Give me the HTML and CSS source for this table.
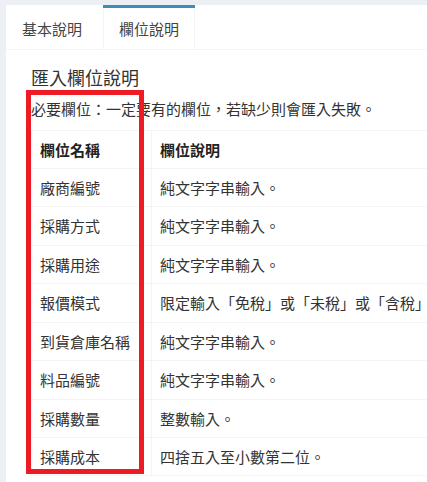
FILE: index.html
```html
<!DOCTYPE html>
<html lang="zh-Hant">
<head>
  <meta charset="UTF-8">
  <title>欄位說明</title>
  <link rel="stylesheet" href="styles.css">
</head>
<body>

<div class="tabs-box">
  <ul class="nav-tabs">
    <li><a href="#">基本說明</a></li>
    <li class="active"><a href="#">欄位說明</a></li>
  </ul>

  <div class="tab-content">
    <div class="pane">
      <h4>匯入欄位說明</h4>
      <p>必要欄位：一定要有的欄位，若缺少則會匯入失敗。</p>

      <table class="field-table">
        <colgroup>
          <col class="col-name">
          <col>
        </colgroup>
        <thead>
          <tr>
            <th>欄位名稱</th>
            <th>欄位說明</th>
          </tr>
        </thead>
        <tbody>
          <tr><td>廠商編號</td><td>純文字字串輸入。</td></tr>
          <tr><td>採購方式</td><td>純文字字串輸入。</td></tr>
          <tr><td>採購用途</td><td>純文字字串輸入。</td></tr>
          <tr><td>報價模式</td><td>限定輸入「免稅」或「未稅」或「含稅」。</td></tr>
          <tr><td>到貨倉庫名稱</td><td>純文字字串輸入。</td></tr>
          <tr><td>料品編號</td><td>純文字字串輸入。</td></tr>
          <tr><td>採購數量</td><td>整數輸入。</td></tr>
          <tr><td>採購成本</td><td>四捨五入至小數第二位。</td></tr>
        </tbody>
      </table>
    </div>
  </div>
</div>

<!-- 標註框 -->
<div class="mark-box"></div>

</body>
</html>
```

FILE: styles.css
```css
html, body {
  overflow: hidden;
}
body {
  font-family: "Noto Sans CJK TC", "Noto Sans", sans-serif;
  font-size: 15px;
  line-height: 1.42857;
  color: #333;
  background: #ecf0f5;
  margin: 0;
  padding: 5px 0 0 6px;
  text-spacing-trim: space-all;
  font-feature-settings: "chws" 0, "halt" 0, "palt" 0;
}
.tabs-box {
  background: #fff;
  width: 720px;
  min-height: 600px;
}
/* Tabs */
.nav-tabs {
  display: flex;
  list-style: none;
  margin: 0;
  padding: 0;
  border-bottom: 1px solid #f4f4f4;
}
.nav-tabs li {
  border-top: 3px solid transparent;
  margin-right: 5px;
}
.nav-tabs li a {
  display: block;
  padding: 10px 15px;
  color: #444;
  text-decoration: none;
  border-left: 1px solid transparent;
  border-right: 1px solid transparent;
}
.nav-tabs li.active {
  border-top-color: #3c8dbc;
}
.nav-tabs li.active a {
  border-left-color: #f4f4f4;
  border-right-color: #f4f4f4;
}
/* Content */
.tab-content {
  padding: 10px;
}
.pane {
  padding: 0 15px;
}
h4 {
  font-size: 18px;
  font-weight: normal;
  line-height: 1.1;
  margin: 8px 0 10px;
  color: #333;
}
p {
  margin: 0 0 10px;
  white-space: nowrap;
}
.field-table {
  width: 660px;
  table-layout: fixed;
  border-collapse: collapse;
  border: 1px solid #f4f4f4;
}
.col-name {
  width: 120px;
}
.field-table th, .field-table td {
  padding: 8px;
  text-align: left;
  border: 1px solid #f4f4f4;
  white-space: nowrap;
}
.field-table th {
  font-weight: bold;
  color: #222;
}
/* Annotation */
.mark-box {
  position: absolute;
  left: 26px;
  top: 90px;
  width: 118px;
  height: 384px;
  box-sizing: border-box;
  border: 5px solid #ed1c24;
}
```
